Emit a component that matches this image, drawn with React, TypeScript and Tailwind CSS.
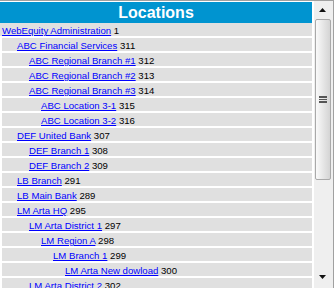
const locations = [
  { name: 'WebEquity Administration', id: 1, level: 0 },
  { name: 'ABC Financial Services', id: 311, level: 1 },
  { name: 'ABC Regional Branch #1', id: 312, level: 2 },
  { name: 'ABC Regional Branch #2', id: 313, level: 2 },
  { name: 'ABC Regional Branch #3', id: 314, level: 2 },
  { name: 'ABC Location 3-1', id: 315, level: 3 },
  { name: 'ABC Location 3-2', id: 316, level: 3 },
  { name: 'DEF United Bank', id: 307, level: 1 },
  { name: 'DEF Branch 1', id: 308, level: 2 },
  { name: 'DEF Branch 2', id: 309, level: 2 },
  { name: 'LB Branch', id: 291, level: 1 },
  { name: 'LB Main Bank', id: 289, level: 1 },
  { name: 'LM Arta HQ', id: 295, level: 1 },
  { name: 'LM Arta District 1', id: 297, level: 2 },
  { name: 'LM Region A', id: 298, level: 3 },
  { name: 'LM Branch 1', id: 299, level: 4 },
  { name: 'LM Arta New dowload', id: 300, level: 5 },
  { name: 'LM Arta District 2', id: 302, level: 2 },
];

// padding per tree depth (level 0 row sits flush left)
const indent = ['pl-[2px]', 'pl-[15px]', 'pl-[27px]', 'pl-[39px]', 'pl-[51px]', 'pl-[63px]'];

function Scrollbar() {
  return (
    <div className="ml-[2px] flex w-[20px] shrink-0 flex-col border-r border-[#a0a0a0] bg-[#efefef]">
      <div className="flex h-[18px] items-center justify-center pr-[2px]">
        <svg width="7" height="4" viewBox="0 0 7 4">
          <path d="M3.5 0 L7 4 L0 4 Z" fill="#111" />
        </svg>
      </div>
      <div className="ml-px flex h-[161px] w-[16px] items-center justify-center rounded-[2px] border border-[#a9a9a9] bg-gradient-to-r from-[#fafafa] to-[#d4d4d4]">
        <div className="flex flex-col gap-[1px]">
          <div className="h-[1.5px] w-[8px] bg-[#555]" />
          <div className="h-[1.5px] w-[8px] bg-[#555]" />
          <div className="h-[1.5px] w-[8px] bg-[#555]" />
        </div>
      </div>
      <div className="flex-1" />
      <div className="flex h-[20px] items-start justify-center pr-[2px] pt-[7px]">
        <svg width="7" height="4" viewBox="0 0 7 4">
          <path d="M0 0 L7 0 L3.5 4 Z" fill="#111" />
        </svg>
      </div>
    </div>
  );
}

export default function App() {
  return (
    <div className="flex h-[288px] w-[334px] overflow-hidden border-t border-[#a0a0a0] bg-white font-['Liberation_Sans',Arial,sans-serif]">
      <div className="w-[312px] shrink-0 pt-px">
        <div className="h-[21px] bg-[#0094d0] text-center text-[16px] font-bold leading-[21px] text-white">
          Locations
        </div>
        <div className="flex flex-col gap-[2px]">
          {locations.map((loc, i) => (
            <div
              key={loc.id}
              className={`h-[13px] whitespace-nowrap bg-[#e0e0e0] text-[9.6px] leading-[15px] text-black ${i === 0 ? '' : 'ml-[2px]'} ${indent[loc.level]}`}
            >
              <a href="#" className="text-[#0000ff] underline">
                {loc.name}
              </a>{' '}
              {loc.id}
            </div>
          ))}
        </div>
      </div>
      <Scrollbar />
    </div>
  );
}
